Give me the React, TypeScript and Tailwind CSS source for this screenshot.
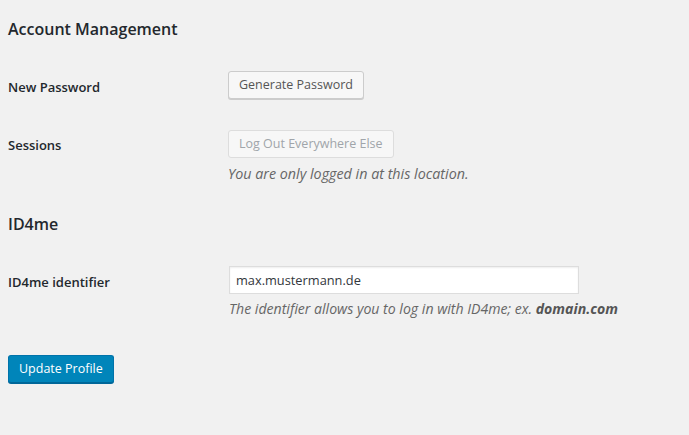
import React from "react";

const font = { fontFamily: '"Open Sans", "Noto Sans", sans-serif' };

export default function App() {
  return (
    <div
      className="w-[689px] h-[435px] bg-[#f1f1f1] text-[#23282d] px-2 overflow-hidden"
      style={font}
    >
      <h2 className="pt-[18px] text-[16px] leading-[23px] font-semibold">Account Management</h2>

      <div className="flex mt-[30px]">
        <div className="w-[220px] pt-[7px] text-[13px] leading-[18px] font-semibold">New Password</div>
        <div>
          <button className="h-[28px] px-[10px] text-[12.5px] leading-[26px] text-[#555] bg-[#f7f7f7] border border-[#ccc] rounded-[3px] shadow-[0_1px_0_#ccc]">
            Generate Password
          </button>
        </div>
      </div>

      <div className="flex mt-[31px]">
        <div className="w-[220px] pt-[6px] text-[13px] leading-[18px] font-semibold">Sessions</div>
        <div>
          <button
            disabled
            className="h-[28px] px-[10px] text-[12.5px] leading-[26px] text-[#a0a5aa] bg-[#f7f7f7] border border-[#ddd] rounded-[3px]"
          >
            Log Out Everywhere Else
          </button>
          <p className="mt-[6px] text-[14.3px] leading-[20px] italic text-[#666]">
            You are only logged in at this location.
          </p>
        </div>
      </div>

      <h2 className="mt-[29px] text-[16px] leading-[23px] font-semibold">ID4me</h2>

      <div className="flex mt-[30px]">
        <div className="w-[221px] pt-[7px] text-[13px] leading-[18px] font-semibold">ID4me identifier</div>
        <div>
          <input
            readOnly
            value="max.mustermann.de"
            className="w-[350px] h-[28px] px-[6px] text-[12.8px] text-[#32373c] bg-white border border-[#ddd] shadow-[inset_0_1px_2px_rgba(0,0,0,0.07)] outline-none"
            style={font}
          />
          <p className="mt-[5px] text-[14.1px] leading-[20px] italic text-[#666]">
            The identifier allows you to log in with ID4me; ex. <b className="font-bold text-[#555]">domain.com</b>
          </p>
        </div>
      </div>

      <button className="mt-[36px] h-[28px] px-[10px] text-[12.5px] leading-[26px] text-white bg-[#0085ba] border border-[#0073aa] border-b-[#006799] rounded-[3px] shadow-[0_1px_0_#006799]">
        Update Profile
      </button>
    </div>
  );
}
